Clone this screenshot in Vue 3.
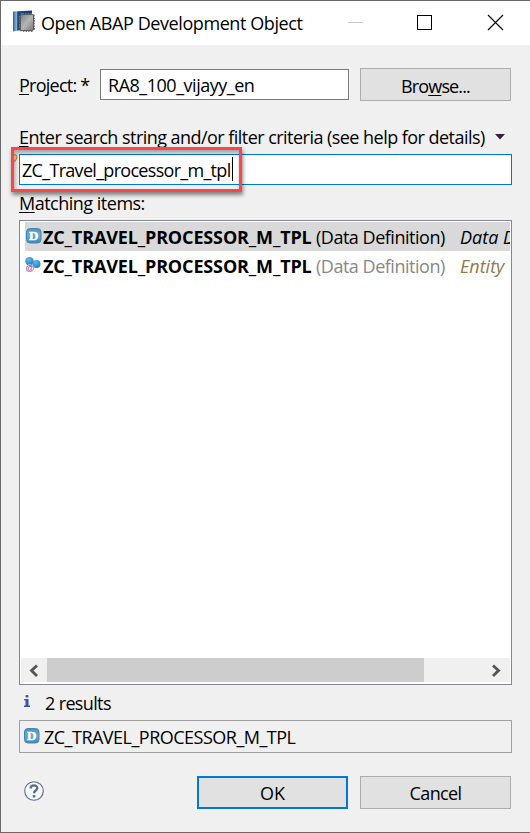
<script setup>
const rows = [
  { kind: 'definition', name: 'ZC_TRAVEL_PROCESSOR_M_TPL', type: '(Data Definition)', detail: 'Data D', selected: true },
  { kind: 'entity', name: 'ZC_TRAVEL_PROCESSOR_M_TPL', type: '(Data Definition)', detail: 'Entity', selected: false },
]
const marks = [
  { y: 14, h: 10, c: '#26375c' }, { y: 57, h: 1, c: '#26375c' }, { y: 69, h: 1, c: '#26375c' },
  { y: 91, h: 2, c: '#26375c' }, { y: 129, h: 13, c: '#26375c' }, { y: 172, h: 12, c: '#26375c' },
  { y: 219, h: 9, c: '#5b3527' }, { y: 240, h: 2, c: '#26375c' }, { y: 290, h: 10, c: '#551a52' },
  { y: 359, h: 2, c: '#551a52' }, { y: 367, h: 2, c: '#551a52' }, { y: 382, h: 2, c: '#551a52' },
  { y: 390, h: 2, c: '#551a52' }, { y: 405, h: 2, c: '#551a52' }, { y: 413, h: 2, c: '#551a52' },
  { y: 659, h: 9, c: '#26375c' }, { y: 705, h: 9, c: '#26375c' }, { y: 751, h: 9, c: '#26375c' },
  { y: 774, h: 9, c: '#111' },
]
</script>

<template>
  <div class="window">
    <svg class="edge" width="1" height="833">
      <rect v-for="m in marks" :key="m.y" x="0" :y="m.y" width="1" :height="m.h" :fill="m.c" />
    </svg>

    <header class="titlebar">
      <svg class="app-icon" width="23" height="24" viewBox="0 0 23 24">
        <defs>
          <linearGradient id="book" x1="0" y1="0" x2="1" y2="0">
            <stop offset="0" stop-color="#2d6098" /><stop offset=".18" stop-color="#8eb4d6" />
            <stop offset=".25" stop-color="#1c4b84" /><stop offset="1" stop-color="#123a70" />
          </linearGradient>
          <linearGradient id="chip" x1="0" y1="0" x2="1" y2="1">
            <stop offset="0" stop-color="#7d7d7d" /><stop offset=".5" stop-color="#b5b5b5" /><stop offset="1" stop-color="#767676" />
          </linearGradient>
        </defs>
        <path d="M1 1.500 20 .5V18L1 21.500Z" fill="url(#book)" />
        <rect x="8.500" y="4.500" width="13" height="16" rx="2" fill="none" stroke="#777" stroke-width="3" stroke-dasharray="1.400 1.200" />
        <rect x="8.500" y="4.500" width="13" height="16" rx="1.500" fill="url(#chip)" stroke="#5c5c5c" />
      </svg>
      <span class="title">Open ABAP Development Object</span>
      <svg class="controls" width="160" height="18" viewBox="0 0 160 18">
        <path d="M0 8.500H15" stroke="#c8c8c8" />
        <rect x="69.500" y="1.500" width="14" height="14" fill="none" stroke="#000" />
        <path d="M140 1 155 16M155 1 140 16" stroke="#000" fill="none" stroke-width="1.100" />
      </svg>
    </header>

    <main class="content">
      <div class="project">
        <label class="project-label"><u>P</u>roject: *</label>
        <div class="field project-field"><span>RA8_100_vijayy_en</span></div>
        <button class="button browse"><span>Bro<u>w</u>se...</span></button>
      </div>

      <div class="search-label">
        <span><u>E</u>nter search string and/or filter criteria (see help for details)</span>
        <svg width="10" height="6" viewBox="0 0 10 6"><path d="M0 0H10L5 5.500Z" fill="#35213f" /></svg>
      </div>

      <div class="field search">
        <span>ZC_Travel_processor_m_tpl</span><i class="caret"></i>
        <svg class="bulb" width="6" height="10" viewBox="0 0 6 10">
          <path d="M0 1Q4 0 4 3Q4 5 2 7L0 8" fill="#f8d69b" stroke="#c98b32" stroke-width="1.200" />
        </svg>
        <div class="highlight"></div>
      </div>

      <div class="matching"><span><u>M</u>atching items:</span></div>

      <section class="list">
        <div class="rows">
          <div v-for="row in rows" :key="row.kind" class="row" :class="{ selected: row.selected }">
            <svg v-if="row.kind === 'definition'" class="row-icon" width="16" height="16" viewBox="0 0 16 16">
              <defs>
                <linearGradient id="badge" x1="0" y1="0" x2="0" y2="1">
                  <stop offset="0" stop-color="#4f91bf" /><stop offset=".5" stop-color="#6ba9d0" /><stop offset="1" stop-color="#3f86b8" />
                </linearGradient>
              </defs>
              <rect x=".5" y=".5" width="14.500" height="14.500" rx="3.500" fill="url(#badge)" stroke="#4485b5" />
              <text x="7.800" y="12" class="badge-letter">D</text>
            </svg>
            <svg v-else class="row-icon" width="16" height="16" viewBox="0 0 16 16">
              <defs>
                <radialGradient id="ball" cx=".4" cy=".3" r=".8">
                  <stop offset="0" stop-color="#62bce8" /><stop offset="1" stop-color="#1578b8" />
                </radialGradient>
              </defs>
              <circle cx="4.500" cy="4.300" r="4.200" fill="url(#ball)" />
              <circle cx="11.500" cy="7" r="4" fill="url(#ball)" />
              <circle cx="4.800" cy="11.500" r="4" fill="#fff" />
              <text x="4.800" y="14" class="at-sign">@</text>
            </svg>
            <b class="name">{{ row.name }}</b>
            <span class="type">{{ row.type }}</span>
            <em class="detail">{{ row.detail }}</em>
          </div>
        </div>
        <div class="scrollbar">
          <svg width="26" height="25" viewBox="0 0 26 25"><path d="M16 7.500 10.500 12.500 16 18" fill="none" stroke="#555" stroke-width="2.800" /></svg>
          <div class="thumb"></div>
          <svg class="right" width="26" height="25" viewBox="0 0 26 25"><path d="M9 7.500 14.500 12.500 9 18" fill="none" stroke="#555" stroke-width="2.800" /></svg>
        </div>
      </section>

      <div class="results">
        <svg width="8" height="14" viewBox="0 0 8 14">
          <rect x="1.500" y="0" width="3" height="2.600" rx="1" fill="#3454a4" />
          <path d="M0 4H4.500V10.500H6V12H0V10.500H1.500V5.200H0Z" fill="#3454a4" />
        </svg>
        <span>2 results</span>
      </div>

      <div class="status">
        <svg width="16" height="16" viewBox="0 0 16 16">
          <rect x=".5" y=".5" width="14.500" height="14.500" rx="3.500" fill="url(#badge)" stroke="#4485b5" />
          <text x="7.800" y="12" class="badge-letter">D</text>
        </svg>
        <span>ZC_TRAVEL_PROCESSOR_M_TPL</span>
      </div>

      <footer class="actions">
        <svg class="help" width="20" height="20" viewBox="0 0 20 20">
          <circle cx="10" cy="10" r="9.300" fill="#f6f7f9" stroke="#5c6b87" stroke-width="1.100" />
          <path d="M6.600 7.400C6.700 3.600 13.300 3.500 13.300 7.100C13.300 9.500 10 9.500 10 12.200" fill="none" stroke="#5c6b87" stroke-width="2.300" />
          <rect x="8.800" y="14" width="2.500" height="2.500" fill="#5c6b87" />
        </svg>
        <button class="button ok"><span>OK</span></button>
        <button class="button cancel"><span>Cancel</span></button>
      </footer>
    </main>
  </div>
</template>

<style>
body { margin: 0; overflow: hidden; }
</style>

<style scoped>
.window {
  position: relative;
  box-sizing: border-box;
  width: 530px;
  height: 833px;
  border: solid #6a6a6a;
  border-width: 1px 0 1px 1px;
  background: #f0f0f0;
  color: #000;
  font: 18px/24px "Open Sans", "Noto Sans", sans-serif;
  white-space: nowrap;
  overflow: hidden;
}
.window * { box-sizing: border-box; }
.window svg { flex: none; display: block; }
.edge { position: absolute; left: -1px; top: -1px; }
u { text-decoration-thickness: 1px; text-underline-offset: 2px; text-decoration-skip-ink: none; }
.titlebar { display: flex; height: 44px; background: #fff; padding-left: 11px; }
.app-icon { margin-top: 9px; }
.title { width: 307px; margin: 10px 0 0 6px; letter-spacing: -0.41px; }
.controls { margin-top: 13px; }
.content { display: flex; flex-direction: column; padding: 23px 17px 0 18px; }
.project { display: flex; height: 33px; }
.project-label { width: 81px; padding-top: 5px; letter-spacing: -0.75px; }
.field { display: flex; background: #fff; border: 1px solid #7a7a7a; }
.project-field { width: 249px; height: 31px; margin: 1px 11px 0 0; padding: 3px 0 0 7px; letter-spacing: -0.48px; }
.button { display: flex; justify-content: center; width: 151px; height: 33px; margin: 0; border: 1px solid #adadad; padding: 5px 0 0; background: #e1e1e1; color: #000; font: inherit; border-radius: 0; }
.browse span { letter-spacing: -0.85px; }
.search-label { display: flex; height: 30px; margin-top: 23px; }
.search-label span { width: 476px; padding-top: 1px; letter-spacing: -0.54px; }
.search-label svg { margin-top: 10px; }
.search { position: relative; width: 493px; height: 31px; border-color: #0078d7; padding: 3px 0 0 2px; letter-spacing: -0.7px; }
.caret { width: 1px; height: 24px; background: #000; margin: -1px 0 0 1px; }
.bulb { position: absolute; left: -7px; top: -1px; }
.highlight { position: absolute; left: -9px; top: -8px; width: 231px; height: 45px; border: 3px solid #fb4549; box-shadow: 1px 3px 4px #0007, inset 1px 3px 4px #0005; }
.matching { height: 35px; padding-top: 6px; letter-spacing: -0.5px; }
.list { display: flex; flex-direction: column; justify-content: space-between; width: 493px; height: 465px; border: 1px solid #828790; background: #fff; padding: 1px 1px 2px; }
.row { display: flex; height: 29px; margin-left: 4px; overflow: hidden; padding-top: 3px; }
.row > * { flex: none; }
.row.selected { background: #d9d9d9; }
.row-icon { margin: 3px 0 0 1px; }
.row:not(.selected) .row-icon { margin: 3px 1px 0 0; }
.name { width: 273px; margin-left: 1px; letter-spacing: -0.14px; }
.type { width: 144px; color: #888; letter-spacing: -0.48px; }
.detail { color: #8f7849; }
.selected .type, .selected .detail { color: #000; }
.badge-letter { font: bold 13px "Liberation Serif", serif; fill: #fff; stroke: #fff; stroke-width: .4px; text-anchor: middle; letter-spacing: 0; }
.at-sign { font: bold 9px "Liberation Sans", sans-serif; fill: #a5439b; text-anchor: middle; letter-spacing: 0; }
.scrollbar { display: flex; height: 24px; background: #f0f0f0; }
.thumb { width: 377px; background: #cdcdcd; }
.right { margin-left: 60px; }
.results { display: flex; height: 35px; padding: 6px 0 0 5px; }
.results svg { margin-top: 4px; }
.results span { margin-left: 13px; letter-spacing: -0.64px; }
.status { display: flex; width: 493px; height: 33px; border: 1px solid #a0a0a0; padding: 4px 0 0 4px; }
.status svg { margin-top: 3px; }
.status span { margin-left: 4px; letter-spacing: -0.51px; }
.actions { display: flex; margin-top: 23px; }
.help { margin: 5px 0 0 5px; }
.ok { border: 2px solid #0078d7; padding-top: 3px; margin: 0 12px 0 153px; }
.cancel { padding-top: 4px; letter-spacing: -0.65px; }
</style>
